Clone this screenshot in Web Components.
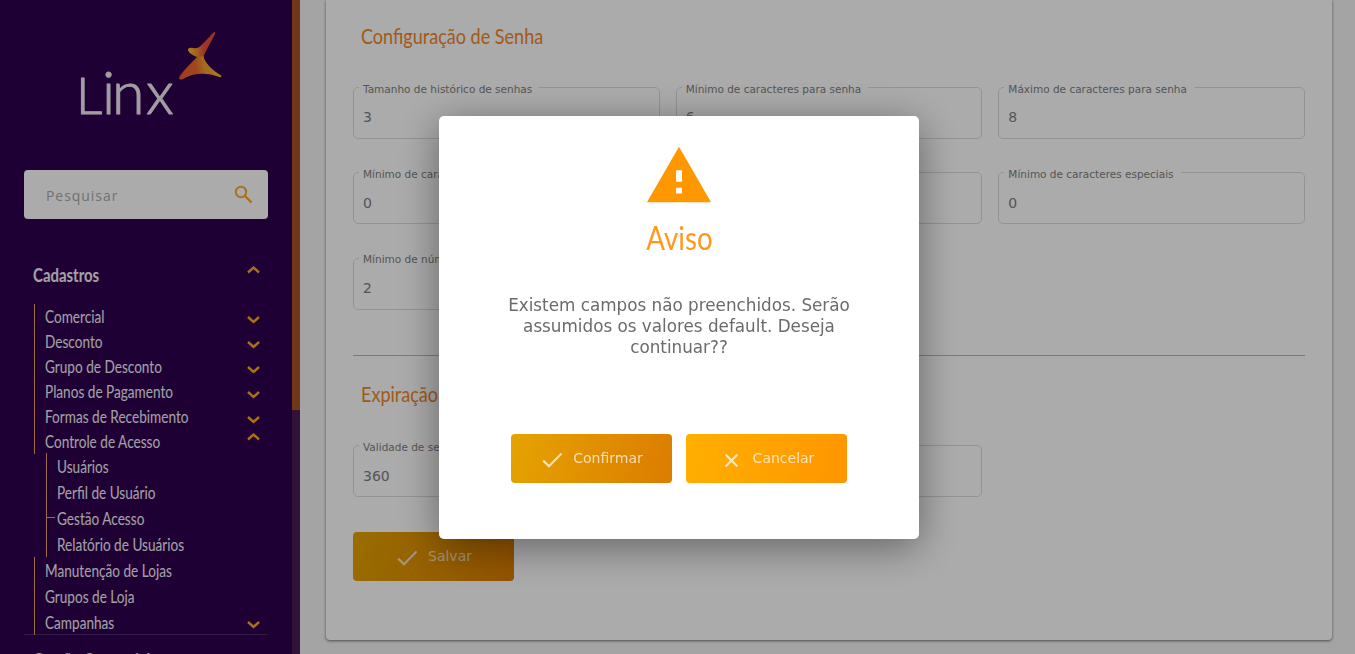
<!DOCTYPE html>
<html lang="pt-BR">
<head>
<meta charset="utf-8">
<title>Configuração de Senha</title>
<style>
  html, body { margin: 0; height: 100%; overflow: hidden; }
  body { font-family: "DejaVu Sans", Verdana, sans-serif; background: #f5f5f5; }
  app-shell { height: 654px; }
</style>
</head>
<body>
<app-shell>
  <side-bar slot="side">
    <tree-row icon="up" title-row>Cadastros</tree-row>
    <tree-group>
      <tree-row icon="down">Comercial</tree-row>
      <tree-row icon="down">Desconto</tree-row>
      <tree-row icon="down">Grupo de Desconto</tree-row>
      <tree-row icon="down">Planos de Pagamento</tree-row>
      <tree-row icon="down">Formas de Recebimento</tree-row>
      <tree-row icon="up">Controle de Acesso</tree-row>
      <tree-group nested>
        <tree-row sub>Usuários</tree-row>
        <tree-row sub>Perfil de Usuário</tree-row>
        <tree-row sub current>Gestão Acesso</tree-row>
        <tree-row sub>Relatório de Usuários</tree-row>
      </tree-group>
      <tree-row tall>Manutenção de Lojas</tree-row>
      <tree-row tall>Grupos de Loja</tree-row>
      <tree-row tall icon="down">Campanhas</tree-row>
    </tree-group>
  </side-bar>

  <form-card>
    <section-title>Configuração de Senha</section-title>
    <field-grid>
      <form-field label="Tamanho de histórico de senhas" value="3"></form-field>
      <form-field label="Mínimo de caracteres para senha" value="6"></form-field>
      <form-field label="Máximo de caracteres para senha" value="8"></form-field>
      <form-field label="Mínimo de caracteres maiúsculos" value="0"></form-field>
      <form-field label="Mínimo de caracteres minúsculos" value="0"></form-field>
      <form-field label="Mínimo de caracteres especiais" value="0"></form-field>
      <form-field label="Mínimo de números" value="2"></form-field>
    </field-grid>
    <hr-line></hr-line>
    <section-title second>Expiração de Senha</section-title>
    <field-grid>
      <form-field label="Validade de senha em dias" value="360"></form-field>
      <form-field label="Aviso de expiração" value=""></form-field>
    </field-grid>
    <action-button icon="check" kind="save">Salvar</action-button>
  </form-card>
</app-shell>

<modal-layer>
  <alert-dialog heading="Aviso" message="Existem campos não preenchidos. Serão assumidos os valores default. Deseja continuar??">
    <action-button icon="check" kind="confirm">Confirmar</action-button>
    <action-button icon="close" kind="cancel">Cancelar</action-button>
  </alert-dialog>
</modal-layer>

<script>
// no Dosis on this machine, so Lato squeezed a bit
const NARROW = 'Lato, "Noto Sans", sans-serif';
const squeeze = (x) => `display: inline-block; transform: scaleX(${x}); transform-origin: 0 50%;`;

const ICONS = {
  up: '<path d="M2 8.5 L7.5 3.5 L13 8.5" fill="none" stroke="currentColor" stroke-width="2.4"/>',
  down: '<path d="M2 4 L7.5 9 L13 4" fill="none" stroke="currentColor" stroke-width="2.4"/>',
  check: '<path d="M1.2 10.6 L7 16.2 L19.6 3.4" fill="none" stroke="currentColor" stroke-width="2.2"/>',
  close: '<path d="M3 3 L17 17 M17 3 L3 17" fill="none" stroke="currentColor" stroke-width="2.6"/>'
};

class AppShell extends HTMLElement {
  connectedCallback() {
    this.attachShadow({ mode: 'open' });
    this.shadowRoot.innerHTML = `
      <style>
        :host { display: flex; width: 100%; overflow: hidden; }
        .side { flex: 0 0 300px; height: 100%; }
        .main { flex: 1; min-width: 0; padding: 0 23px 14px 26px; box-sizing: border-box; height: 100%; display: flex; }
      </style>
      <div class="side"><slot name="side"></slot></div>
      <div class="main"><slot></slot></div>`;
  }
}

class SideBar extends HTMLElement {
  connectedCallback() {
    this.attachShadow({ mode: 'open' });
    this.shadowRoot.innerHTML = `
      <style>
        :host { display: flex; height: 100%; background: #2f0050; overflow: hidden; position: relative; }
        .content { flex: 0 0 292px; box-sizing: border-box; padding: 0 24px; display: flex; flex-direction: column; }
        .logo { display: block; flex: none; margin: 28px 0 0 52px; }
        .search { height: 49px; margin-top: 36px; flex: none; box-sizing: border-box; background: #fff; border-radius: 4px; display: flex; align-items: center; justify-content: space-between; padding: 1px 15px 0 22px; font: 14px "Open Sans", sans-serif; letter-spacing: .95px; color: #aaa; }
        .search svg { display: block; position: relative; top: -1px; }
        .tree { margin-top: 44px; flex: none; }
        .rule { flex: none; height: 1px; background: #4b2a6b; margin-top: -1px; }
        .next { flex: none; font: bold 18px/22px ${NARROW}; color: #f0f0f0; padding: 14px 9px 0; white-space: nowrap; }
        .next span { ${squeeze(.83)} }
        .track { flex: 0 0 8px; background: #4d1c52; }
        .thumb { height: 410px; background: #a85424; }
      </style>
      <div class="content">
        <svg class="logo" width="150" height="106" viewBox="76 28 150 106">
          <defs>
            <linearGradient id="low" gradientUnits="userSpaceOnUse" x1="179" y1="78" x2="222" y2="70">
              <stop offset="0" stop-color="#f0562f"/><stop offset=".42" stop-color="#ee6a2e"/><stop offset=".62" stop-color="#f79a30"/><stop offset="1" stop-color="#ffc234"/>
            </linearGradient>
            <linearGradient id="high" gradientUnits="userSpaceOnUse" x1="188" y1="50" x2="204" y2="50">
              <stop offset="0" stop-color="#ffc030"/><stop offset=".55" stop-color="#f5902e"/><stop offset="1" stop-color="#e8503a"/>
            </linearGradient>
          </defs>
          <text y="114" font-family="Lato, sans-serif" font-weight="300" fill="#f0eaf4" stroke="#f0eaf4" stroke-width="1" stroke-linejoin="round"><tspan x="76" font-size="52">L</tspan><tspan x="102 112 146" font-size="59">inx</tspan></text>
          <path d="M213.5 32.5 C215 31.5 215.6 32.5 215 34 C211 42 205 52 203.5 57 L197 61 L197 57 C192 55 188.5 52.5 188 50 C188 48 190 47.5 193 48 C196 48.5 198 48 200 46.5 C205 42 209 37 213.5 32.5 Z" fill="url(#high)"/>
          <path d="M197 57 L203.5 56 C204 62 212 70 221 75.5 C222 76.5 221 77.5 219.5 77 C207 72 193 72.5 183 79 C179.5 80.5 178.5 79 179.5 76.5 C184 70 191 63 197 57 Z" fill="url(#low)"/>
        </svg>
        <div class="search">Pesquisar
          <svg width="19" height="19" viewBox="0 0 19 19"><circle cx="7" cy="7" r="5.2" fill="none" stroke="#ffa928" stroke-width="2"/><path d="M11 11 L17.5 17.5" stroke="#ffa928" stroke-width="2.4"/></svg>
        </div>
        <div class="tree"><slot></slot></div>
        <div class="rule"></div>
        <div class="next"><span>Gestão Comercial</span></div>
      </div>
      <div class="track"><div class="thumb"></div></div>`;
  }
}

class TreeGroup extends HTMLElement {
  connectedCallback() {
    this.attachShadow({ mode: 'open' });
    this.shadowRoot.innerHTML = `
      <style>
        :host { display: block; margin-left: 10px; }
        :host([nested]) { margin-left: 12px; margin-top: -1px; border-left: 1px solid #e8a36a; }
      </style>
      <slot></slot>`;
  }
}

class TreeRow extends HTMLElement {
  connectedCallback() {
    const icon = this.getAttribute('icon');
    const isTitle = this.hasAttribute('title-row');
    this.attachShadow({ mode: 'open' });
    this.shadowRoot.innerHTML = `
      <style>
        :host { display: flex; align-items: center; justify-content: space-between; box-sizing: border-box; height: 25px; padding-left: 10px; border-left: 1px solid #e8a36a; font: 17px ${NARROW}; color: #f4f1f6; position: relative; white-space: nowrap; }
        :host([tall]) { height: 26px; }
        :host([sub]) { height: 26px; border-left: 0; }
        :host([title-row]) { height: 24px; border-left: 0; font-weight: bold; font-size: 18px; padding-left: 9px; margin-bottom: 17px; }
        :host([current])::before { content: ""; position: absolute; left: 0; top: 12px; width: 8px; height: 1px; background: #e8a36a; }
        span { ${squeeze(isTitle ? .83 : .8)} }
        svg { display: block; color: #ffa928; margin-right: 7px; position: relative; top: 2px; flex: none; }
        :host([icon="up"]) svg { top: -5px; }
      </style>
      <span><slot></slot></span>
      ${icon ? `<svg width="15" height="12" viewBox="0 0 15 12">${ICONS[icon]}</svg>` : ''}`;
  }
}

class FormCard extends HTMLElement {
  connectedCallback() {
    this.attachShadow({ mode: 'open' });
    this.shadowRoot.innerHTML = `
      <style>
        :host { display: block; flex: 1; align-self: stretch; box-sizing: border-box; background: #fff; border-radius: 0 0 4px 4px; box-shadow: 0 1px 3px rgba(0,0,0,.55); padding: 19px 27px 0; }
      </style>
      <slot></slot>`;
  }
}

class SectionTitle extends HTMLElement {
  connectedCallback() {
    this.attachShadow({ mode: 'open' });
    this.shadowRoot.innerHTML = `
      <style>
        :host { display: block; font: 22px/34px ${NARROW}; color: #f0862a; padding-left: 8px; margin-bottom: 34px; }
        :host([second]) { margin-bottom: 34.4px; }
        span { ${squeeze(.82)} }
      </style>
      <span><slot></slot></span>`;
  }
}

class FieldGrid extends HTMLElement {
  connectedCallback() {
    this.attachShadow({ mode: 'open' });
    this.shadowRoot.innerHTML = `
      <style>
        :host { display: grid; grid-template-columns: repeat(3, 1fr); column-gap: 16px; row-gap: 33.3px; }
      </style>
      <slot></slot>`;
  }
}

class FormField extends HTMLElement {
  connectedCallback() {
    this.attachShadow({ mode: 'open' });
    this.shadowRoot.innerHTML = `
      <style>
        :host { display: block; position: relative; }
        fieldset { margin: 0; padding: 0 9px; height: 52px; box-sizing: border-box; border: 1px solid #dcdcdc; border-radius: 5px; }
        legend { padding: 0 7px 0 4px; margin-left: -4px; font-size: 10.5px; line-height: 0; height: 0; color: #808080; white-space: nowrap; }
        legend span { position: relative; top: 1px; }
        .value { font-size: 14px; line-height: 17px; padding-top: 21.4px; color: #7e7e7e; }
      </style>
      <fieldset>
        <legend><span>${this.getAttribute('label')}</span></legend>
        <div class="value">${this.getAttribute('value') || '&nbsp;'}</div>
      </fieldset>`;
  }
}

class HrLine extends HTMLElement {
  connectedCallback() {
    this.attachShadow({ mode: 'open' });
    this.shadowRoot.innerHTML = `
      <style>:host { display: block; height: 1px; background: #ffab40; margin: 45.4px 0 21px; }</style>`;
  }
}

class ActionButton extends HTMLElement {
  connectedCallback() {
    const kind = this.getAttribute('kind');
    const icon = this.getAttribute('icon');
    const bg = kind === 'cancel'
      ? 'linear-gradient(105deg, #ffb000, #ff9500)'
      : 'linear-gradient(105deg, #e5a300, #dc7c00)';
    const size = icon === 'close' ? 17 : 20;
    const gap = icon === 'close' ? 13 : 11;
    this.attachShadow({ mode: 'open' });
    this.shadowRoot.innerHTML = `
      <style>
        :host { display: flex; align-items: center; justify-content: center; box-sizing: border-box; gap: ${gap}px; width: 161px; height: 49px; padding-left: 2px; border-radius: 4px; background: ${bg}; color: rgba(255,255,255,.7); font-size: 14px; }
        :host([kind="cancel"]) { padding-left: 4px; }
        :host([kind="save"]) { margin-top: 34.6px; }
        svg { display: block; position: relative; top: 2px; flex: none; }
      </style>
      <svg width="${size}" height="${size}" viewBox="0 0 20 20">${ICONS[icon]}</svg>
      <span><slot></slot></span>`;
  }
}

class ModalLayer extends HTMLElement {
  connectedCallback() {
    this.attachShadow({ mode: 'open' });
    this.shadowRoot.innerHTML = `
      <style>
        :host { position: fixed; inset: 0; background: rgba(0,0,0,.33); display: flex; align-items: center; justify-content: center; padding-left: 3px; }
      </style>
      <slot></slot>`;
  }
}

class AlertDialog extends HTMLElement {
  connectedCallback() {
    this.attachShadow({ mode: 'open' });
    this.shadowRoot.innerHTML = `
      <style>
        :host { display: block; width: 480px; height: 423px; box-sizing: border-box; background: #fff; border-radius: 5px; box-shadow: 0 8px 40px rgba(0,0,0,.42); text-align: center; padding-top: 25px; }
        svg { display: block; margin: 0 auto; }
        h2 { margin: 0; font: 400 33px/44px ${NARROW}; color: #ff9a1c; padding-top: 4px; }
        h2 span { display: inline-block; transform: scaleX(.84); }
        p { margin: 36px auto 0; width: 380px; font-size: 16.8px; line-height: 21px; color: #6b6b6b; }
        .actions { display: flex; justify-content: center; gap: 14px; margin-top: 76px; }
      </style>
      <svg width="70" height="70" viewBox="0 0 24 24"><path fill="#ff9800" d="M1 21h22L12 2 1 21zm12-3h-2v-2h2v2zm0-4h-2v-4h2v4z"/></svg>
      <h2><span>${this.getAttribute('heading')}</span></h2>
      <p>${this.getAttribute('message')}</p>
      <div class="actions"><slot></slot></div>`;
  }
}

customElements.define('app-shell', AppShell);
customElements.define('side-bar', SideBar);
customElements.define('tree-group', TreeGroup);
customElements.define('tree-row', TreeRow);
customElements.define('form-card', FormCard);
customElements.define('section-title', SectionTitle);
customElements.define('field-grid', FieldGrid);
customElements.define('form-field', FormField);
customElements.define('hr-line', HrLine);
customElements.define('action-button', ActionButton);
customElements.define('modal-layer', ModalLayer);
customElements.define('alert-dialog', AlertDialog);
</script>
</body>
</html>
